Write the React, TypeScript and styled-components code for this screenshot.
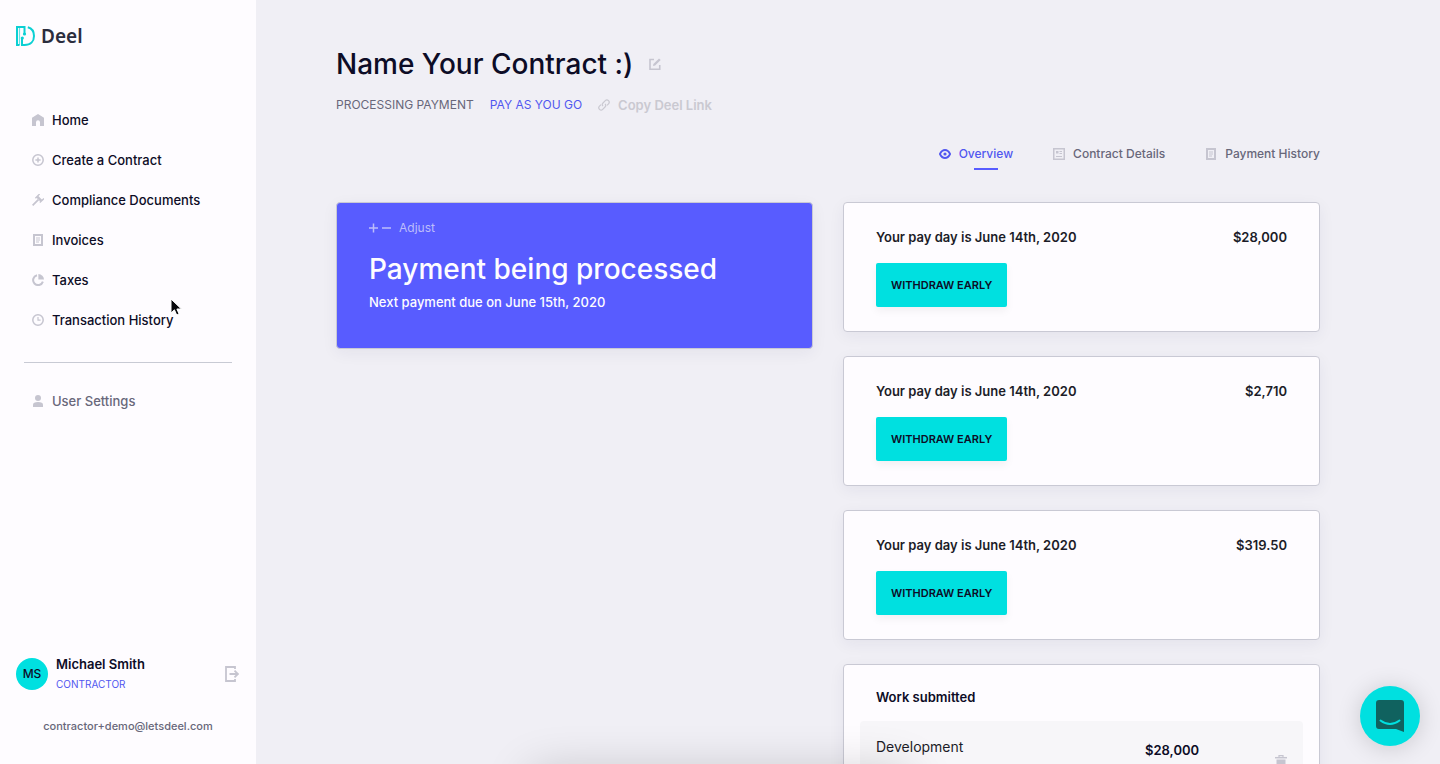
import React from "react";
import styled, { createGlobalStyle } from "styled-components";

const GlobalStyle = createGlobalStyle`
  *, *::before, *::after { box-sizing: border-box; }
  body {
    margin: 0;
    background: #f0eff5;
    color: #0d0c26;
    font-family: Inter, "Liberation Sans", sans-serif;
    font-size: 13px;
    line-height: 20px;
    -webkit-font-smoothing: antialiased;
  }
  h1, h2, p, ul { margin: 0; padding: 0; }
  ul { list-style: none; }
  a { color: inherit; text-decoration: none; }
  button { font: inherit; color: inherit; background: none; border: 0; padding: 0; cursor: pointer; }
  svg { display: block; flex: none; }
`;

const Shell = styled.div`
  display: flex;
  height: 100vh;
  overflow: hidden;
`;

const Sidebar = styled.aside`
  display: flex;
  flex-direction: column;
  flex: none;
  width: 256px;
  padding: 24px 16px 28px;
  background: #fefcff;
`;

const Logo = styled.a`
  display: flex;
  align-items: center;
  gap: 6px;
  height: 24px;
  font-family: "Noto Sans", "Open Sans", sans-serif;
  font-size: 19px;
  font-weight: 600;
  color: #2b2d3d;
`;

const Nav = styled.nav`
  flex: 1;
  padding: 52px 8px 0;
`;

const NavList = styled.ul`
  display: flex;
  flex-direction: column;
  padding: 0 8px;
`;

const NavLink = styled.a<{ $muted?: boolean }>`
  display: flex;
  align-items: center;
  gap: 8px;
  height: 40px;
  font-weight: 500;
  color: ${(p) => (p.$muted ? "#68677a" : "#0d0c26")};
  svg { color: #c6c5d0; }
`;

const Divider = styled.hr`
  width: 100%;
  margin: 22px 0 18px;
  border: 0;
  border-top: 1px solid #c8cad4;
`;

const Profile = styled.div`
  display: flex;
  align-items: center;
  gap: 8px;
`;

const Avatar = styled.div`
  display: grid;
  place-items: center;
  width: 32px;
  height: 32px;
  border-radius: 50%;
  background: #00e0e0;
  font-size: 12px;
  font-weight: 500;
`;

const ProfileText = styled.div`
  flex: 1;
`;

const ProfileName = styled.p`
  font-size: 13px;
  font-weight: 600;
`;

const ProfileRole = styled.p`
  font-size: 10px;
  color: #5157f0;
`;

const IconButton = styled.button`
  display: grid;
  place-items: center;
  color: #c6c5d0;
`;

const Email = styled.p`
  margin-top: 22px;
  text-align: center;
  font-size: 11px;
  font-weight: 500;
  color: #68677a;
`;

const Main = styled.main`
  flex: 1;
  min-width: 0;
  overflow: auto;
  scrollbar-width: none;
  padding: 44px 120px 0 80px;
`;

const TitleRow = styled.div`
  display: flex;
  align-items: center;
  gap: 16px;
`;

const Title = styled.h1`
  font-size: 28px;
  line-height: 40px;
  font-weight: 500;
`;

const MetaRow = styled.div`
  display: flex;
  align-items: center;
  gap: 16px;
  margin-top: 11px;
`;

const Tag = styled.span<{ $accent?: boolean }>`
  font-size: 12px;
  color: ${(p) => (p.$accent ? "#5157f0" : "#68677a")};
`;

const CopyLink = styled.button`
  display: flex;
  align-items: center;
  gap: 8px;
  font-weight: 600;
  color: #cac9d1;
`;

const Tabs = styled.nav`
  display: flex;
  justify-content: flex-end;
  gap: 40px;
  margin-top: 29px;
`;

const Tab = styled.a<{ $active?: boolean }>`
  display: flex;
  align-items: center;
  gap: 8px;
  position: relative;
  height: 26px;
  padding-bottom: 6px;
  font-size: 12px;
  font-weight: 500;
  color: ${(p) => (p.$active ? "#5157f0" : "#68677a")};
  svg { color: ${(p) => (p.$active ? "#5157f0" : "#c6c5d0")}; }
  &::after {
    content: "";
    display: ${(p) => (p.$active ? "block" : "none")};
    position: absolute;
    bottom: 0;
    left: calc(50% + 10px);
    width: 24px;
    height: 2px;
    margin-left: -12px;
    background: #585cff;
  }
`;

const Columns = styled.div`
  display: grid;
  grid-template-columns: 1fr 1fr;
  align-items: start;
  gap: 30px;
  margin-top: 32px;
`;

const CardStack = styled.div`
  display: flex;
  flex-direction: column;
  gap: 24px;
`;

const Card = styled.section<{ $filled?: boolean }>`
  padding: 24px 32px;
  border: 1px solid #c9c9d4;
  border-radius: 4px;
  background: ${(p) => (p.$filled ? "#585cff" : "#fefcff")};
  color: ${(p) => (p.$filled ? "#fefcff" : "#1c1c28")};
  box-shadow: 0 4px 16px rgba(40, 40, 80, 0.06);
`;

const StatusCard = styled(Card)`
  padding: 15px 32px 36px;
`;

const Adjust = styled.button`
  display: flex;
  align-items: center;
  gap: 7px;
  font-size: 12px;
  color: #bcbdfb;
`;

const StatusTitle = styled.h2`
  margin-top: 11px;
  font-size: 28px;
  line-height: 40px;
  font-weight: 500;
`;

const StatusText = styled.p`
  margin-top: 3px;
  font-weight: 500;
`;

const CardHead = styled.div`
  display: flex;
  justify-content: space-between;
  font-weight: 600;
`;

const PrimaryButton = styled.button`
  height: 44px;
  margin-top: 16px;
  padding: 0 15px;
  border-radius: 2px;
  background: #00e0e0;
  font-size: 11px;
  font-weight: 600;
  color: #0d0c26;
  box-shadow: 0 4px 8px rgba(0, 0, 0, 0.05);
`;

const WorkCard = styled(Card)`
  padding: 22px 16px 16px;
`;

const WorkTitle = styled.h2`
  padding: 0 16px;
  font-size: 13px;
  line-height: 20px;
  font-weight: 600;
  color: #0d0c26;
`;

const WorkItem = styled.div`
  display: grid;
  grid-template-columns: 1fr 128px 16px;
  min-height: 88px;
  margin-top: 14px;
  padding: 16px 14px 16px 16px;
  border-radius: 4px;
  background: #f7f6f9;
`;

const WorkName = styled.p`
  font-size: 14px;
`;

const WorkAmount = styled.p`
  padding-top: 3px;
  font-weight: 600;
  color: #0d0c26;
`;

const RemoveButton = styled(IconButton)`
  align-self: start;
  margin-top: 18px;
`;

const ChatButton = styled.button`
  position: fixed;
  right: 20px;
  bottom: 18px;
  display: grid;
  place-items: center;
  width: 60px;
  height: 60px;
  border-radius: 50%;
  background: #00e0e0;
  box-shadow: 0 2px 24px rgba(0, 0, 0, 0.16);
`;

const BottomShade = styled.div`
  position: fixed;
  left: 50%;
  top: 100%;
  width: 380px;
  height: 40px;
  margin-left: -190px;
  border-radius: 8px;
  box-shadow: 0 8px 48px rgba(0, 0, 0, 0.2);
  pointer-events: none;
`;

const Pointer = styled.svg`
  position: fixed;
  left: 169px;
  top: 297px;
  pointer-events: none;
`;

type IconProps = { children: React.ReactNode; size?: number };
const Icon = ({ children, size = 12 }: IconProps) => (
  <svg width={size} height={size} viewBox={`0 0 ${size} ${size}`} fill="none" stroke="currentColor" strokeWidth="1.5" aria-hidden="true">
    {children}
  </svg>
);

const HomeIcon = () => (
  <Icon><path d="M0 3.8 6 0l6 3.8V12H8V8.2a2 2 0 0 0-4 0V12H0z" fill="currentColor" stroke="none" /></Icon>
);
const PlusCircleIcon = () => (
  <Icon><circle cx="6" cy="6" r="5.2" /><path d="M6 3.4v5.2M3.4 6h5.2" /></Icon>
);
const GavelIcon = () => (
  <Icon><path d="M.6 11.4 6.4 5.6" strokeWidth="1.8" /><path d="M5.2 2.6 9.400 6.800" strokeWidth="2.6" /><path d="M3.400 4.200 7.600 0M7.800 8.600 12 4.400" strokeWidth="1.400" /></Icon>
);
const InvoiceIcon = () => (
  <Icon><path d="M2 1h8v10H2z" strokeWidth="2" /><path d="M4 4h4M4 6h4M4 8h3" strokeWidth="1" /></Icon>
);
const PieIcon = () => (
  <Icon><path d="M5 1.2A5 5 0 1 0 10.9 7.6" strokeWidth="2" /><path d="M6.4 0A5.6 5.6 0 0 1 12 5.6H6.4z" fill="currentColor" stroke="none" /></Icon>
);
const ClockIcon = () => (
  <Icon><circle cx="6" cy="6" r="5.2" /><path d="M6 3v3.2h2.6" strokeWidth="1.2" /></Icon>
);
const UserIcon = () => (
  <Icon><g fill="currentColor" stroke="none"><circle cx="6" cy="3" r="3" /><path d="M1 12V9.8C1 8 2.600 7 6 7s5 1 5 2.800V12z" /></g></Icon>
);
const LogoutIcon = () => (
  <Icon size={16}><path d="M11 3V1H2v14h9v-2" strokeWidth="1.800" /><path d="M5.500 8h9M10.500 4.600 13.900 8l-3.400 3.400" strokeWidth="1.800" /></Icon>
);
const EditIcon = () => (
  <Icon><path d="M5 1.500H1v9.750h9.750V7" strokeWidth="1.600" /><path d="M4 8l.4-2L10 .4 11.700 2 6.100 7.600z" fill="currentColor" stroke="none" /></Icon>
);
const LinkIcon = () => (
  <Icon><g strokeWidth="1.200"><path d="M5 7.200a2.300 2.300 0 0 1 0-3.200L7.300 1.600a2.250 2.250 0 0 1 3.200 3.200L9 6.300" /><path d="M7 4.800a2.300 2.300 0 0 1 0 3.200l-2.300 2.400a2.250 2.250 0 0 1-3.200-3.200L3 5.700" /></g></Icon>
);
const EyeIcon = () => (
  <Icon><path d="M.9 6C2.200 3.300 3.900 2 6 2s3.800 1.300 5.100 4C9.800 8.700 8.100 10 6 10S2.200 8.700.9 6z" strokeWidth="1.800" /><circle cx="6" cy="6" r="1.600" fill="currentColor" stroke="none" /></Icon>
);
const DetailsIcon = () => (
  <Icon><path d="M.75.75h10.500v10.500H.75z" /><path d="M3 3h2.500v2.500H3z" fill="currentColor" stroke="none" /><path d="M6.500 3.500H9M6.500 5.500H9M3 8.500h6" strokeWidth="1" /></Icon>
);
const TrashIcon = () => (
  <Icon><path d="M0 2.700h12" /><path d="M4 2V.7h4V2" strokeWidth="1.200" /><path d="M1.500 4.500h9V12h-9z" fill="currentColor" stroke="none" /></Icon>
);

const LogoMark = () => (
  <svg width="19" height="20" viewBox="0 0 19 20" fill="none" stroke="#0bd0d3" strokeWidth="2" aria-hidden="true">
    <path d="M3.500 19H1V1h7.500v7" />
    <path d="M3.500 2v17" strokeWidth="1.200" opacity="0.600" />
    <path d="M6 11.500V19h2.500C14.500 19 18 15.400 18 10c0-4.400-2.300-7.700-6.200-8.700" />
    <circle cx="8.500" cy="8" r="1.600" fill="#0bd0d3" stroke="none" />
    <circle cx="6.300" cy="12" r="1.600" fill="#0bd0d3" stroke="none" />
  </svg>
);

const navItems = [
  { label: "Home", icon: <HomeIcon /> },
  { label: "Create a Contract", icon: <PlusCircleIcon /> },
  { label: "Compliance Documents", icon: <GavelIcon /> },
  { label: "Invoices", icon: <InvoiceIcon /> },
  { label: "Taxes", icon: <PieIcon /> },
  { label: "Transaction History", icon: <ClockIcon /> },
];

const payDays = ["$28,000", "$2,710", "$319.50"];

export default function App() {
  return (
    <>
      <GlobalStyle />
      <Shell>
        <Sidebar>
          <Logo href="#"><LogoMark />Deel</Logo>
          <Nav>
            <NavList>
              {navItems.map((item) => (
                <li key={item.label}>
                  <NavLink href="#">{item.icon}{item.label}</NavLink>
                </li>
              ))}
            </NavList>
            <Divider />
            <NavList>
              <li><NavLink href="#" $muted><UserIcon />User Settings</NavLink></li>
            </NavList>
          </Nav>
          <Profile>
            <Avatar>MS</Avatar>
            <ProfileText>
              <ProfileName>Michael Smith</ProfileName>
              <ProfileRole>CONTRACTOR</ProfileRole>
            </ProfileText>
            <IconButton aria-label="Log out"><LogoutIcon /></IconButton>
          </Profile>
          <Email>contractor+demo@letsdeel.com</Email>
        </Sidebar>

        <Main>
          <TitleRow>
            <Title>Name Your Contract :)</Title>
            <IconButton aria-label="Rename contract"><EditIcon /></IconButton>
          </TitleRow>
          <MetaRow>
            <Tag>PROCESSING PAYMENT</Tag>
            <Tag $accent>PAY AS YOU GO</Tag>
            <CopyLink><LinkIcon />Copy Deel Link</CopyLink>
          </MetaRow>
          <Tabs>
            <Tab href="#" $active><EyeIcon />Overview</Tab>
            <Tab href="#"><DetailsIcon />Contract Details</Tab>
            <Tab href="#"><InvoiceIcon />Payment History</Tab>
          </Tabs>
          <Columns>
            <StatusCard $filled>
              <Adjust>
                <svg width="23" height="10" viewBox="0 0 23 10" stroke="currentColor" strokeWidth="1.500" aria-hidden="true">
                  <path d="M0 5h9M4.500.5v9M13 5h9" />
                </svg>
                Adjust
              </Adjust>
              <StatusTitle>Payment being processed</StatusTitle>
              <StatusText>Next payment due on June 15th, 2020</StatusText>
            </StatusCard>
            <CardStack>
              {payDays.map((amount) => (
                <Card key={amount}>
                  <CardHead>
                    <p>Your pay day is June 14th, 2020</p>
                    <p>{amount}</p>
                  </CardHead>
                  <PrimaryButton>WITHDRAW EARLY</PrimaryButton>
                </Card>
              ))}
              <WorkCard>
                <WorkTitle>Work submitted</WorkTitle>
                <WorkItem>
                  <WorkName>Development</WorkName>
                  <WorkAmount>$28,000</WorkAmount>
                  <RemoveButton aria-label="Remove work item"><TrashIcon /></RemoveButton>
                </WorkItem>
              </WorkCard>
            </CardStack>
          </Columns>
        </Main>
      </Shell>
      <BottomShade />
      <ChatButton aria-label="Open chat">
        <svg width="28" height="32" viewBox="0 0 28 32" aria-hidden="true">
          <path d="M3 0h22a3 3 0 0 1 3 3v29l-8-3H3a3 3 0 0 1-3-3V3a3 3 0 0 1 3-3z" fill="#10625f" />
          <path d="M4.500 20.500c6 4.500 13 4.500 19 0" fill="none" stroke="#00e0e0" strokeWidth="2" strokeLinecap="round" />
        </svg>
      </ChatButton>
      <Pointer width="14" height="20" viewBox="0 0 14 20" aria-hidden="true">
        <path d="M2 2v14l3.400-3.200L7.700 18l2.400-1-2.200-5h4.500z" fill="#08080c" stroke="#fff" />
      </Pointer>
    </>
  );
}
